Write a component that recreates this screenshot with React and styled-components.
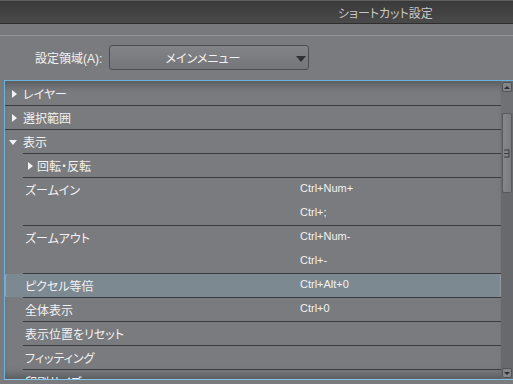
import styled, { createGlobalStyle, css } from 'styled-components';

const GlobalStyle = createGlobalStyle`
  html, body {
    margin: 0;
    padding: 0;
    background: #7a7b7e;
    overflow: hidden;
  }
  body {
    font-family: "Liberation Sans", "Noto Sans CJK JP", sans-serif;
  }
`;

const Window = styled.div`
  width: 513px;
  height: 384px;
  display: flex;
  flex-direction: column;
  background: #7a7b7e;
  color: #f2f2f2;
  font-size: 12px;
  font-feature-settings: "palt";
  overflow: hidden;
`;

const TitleBar = styled.div`
  height: 24px;
  box-sizing: border-box;
  display: flex;
  align-items: center;
  padding-left: 338px;
  background: linear-gradient(#3a3a3a, #4a4a4a);
  border-top: 1px solid #5e5e5e;
  border-bottom: 1px solid #2e2e2e;
  color: #c8c8c8;
  white-space: nowrap;
`;

const Band = styled.div`
  height: 11px;
  border-bottom: 1px solid #949598;
  background: #78797c;
`;

const Panel = styled.div`
  flex: 1;
  display: flex;
  flex-direction: column;
  padding-top: 9px;
`;

const AreaRow = styled.div`
  display: flex;
  align-items: center;
  height: 25px;
  padding-left: 35px;
`;

const Label = styled.div`
  width: 74px;
  flex-shrink: 0;
  white-space: nowrap;
`;

const Select = styled.div`
  width: 200px;
  height: 25px;
  box-sizing: border-box;
  display: flex;
  align-items: center;
  border: 1px solid #4c4d4f;
  border-radius: 3px;
  background: linear-gradient(#828386, #75767a);
`;

const SelectText = styled.div`
  flex: 1;
  text-align: center;
`;

const SelectArrow = styled.span`
  width: 0;
  height: 0;
  margin: 2px 2px 0 0;
  border-left: 5px solid transparent;
  border-right: 5px solid transparent;
  border-top: 6px solid #303133;
`;

const ListBox = styled.div`
  margin: 10px 0 0 4px;
  height: 300px;
  box-sizing: border-box;
  display: flex;
  border-top: 1px solid #6cb2dc;
  border-left: 1px solid #6cb2dc;
  border-bottom: 1px solid #86c4e6;
`;

const List = styled.div`
  flex: 1;
  overflow: hidden;
  box-shadow: inset 0 10px 8px -6px rgba(0, 0, 0, 0.28),
    inset 0 -10px 8px -6px rgba(0, 0, 0, 0.28);
`;

const Row = styled.div`
  display: flex;
  flex-direction: column;
`;

const Rule = styled.div`
  height: 1px;
  margin-left: ${(p) => p.$indent}px;
  background: ${(p) => (p.$hidden ? 'transparent' : '#3a3b3d')};
`;

const Body = styled.div`
  display: grid;
  grid-template-columns: 295px 1fr;
  height: ${(p) => p.$height}px;
  ${(p) =>
    p.$selected &&
    css`
      background: #7c8991;
      border-radius: 2px;
      box-shadow: inset 1px 0 #97a3aa, inset -1px 0 #8e9aa1;
    `}
`;

const Name = styled.div`
  display: flex;
  align-items: center;
  height: 22px;
  padding: 0 0 1px ${(p) => p.$pad}px;
  white-space: nowrap;
`;

const CaretBox = styled.span`
  width: 8px;
  display: flex;
  justify-content: flex-end;
  margin-right: ${(p) => p.$gap}px;
`;

const Caret = styled.span`
  width: 0;
  height: 0;
  ${(p) =>
    p.$open
      ? css`
          margin-top: 3px;
          border-left: 4px solid transparent;
          border-right: 4px solid transparent;
          border-top: 5px solid #f2f2f2;
        `
      : css`
          margin-top: 1px;
          border-top: 4px solid transparent;
          border-bottom: 4px solid transparent;
          border-left: 5px solid #f2f2f2;
        `}
`;

const Keys = styled.div`
  font-size: 11px;
  line-height: 24px;
  margin-top: -2px;
  white-space: nowrap;
`;

const Scrollbar = styled.div`
  width: 12px;
  display: flex;
  flex-direction: column;
  background: #68696c;
`;

const ScrollButton = styled.div`
  width: 10px;
  height: 10px;
  box-sizing: border-box;
  margin: ${(p) => (p.$down ? '0 0 1px 1px' : '1px 0 0 1px')};
  display: flex;
  align-items: center;
  justify-content: center;
  border: 1px solid #525356;
  border-radius: 2px;
  background: #848588;
`;

const ScrollArrow = styled.span`
  width: 0;
  height: 0;
  border-left: 3px solid transparent;
  border-right: 3px solid transparent;
  ${(p) =>
    p.$down
      ? css`border-top: 3px solid #2e2f31;`
      : css`border-bottom: 3px solid #2e2f31;`}
`;

const TrackGap = styled.div`
  height: ${(p) => p.$size}px;
  background: #707174;
`;

const Thumb = styled.div`
  width: 10px;
  height: 80px;
  box-sizing: border-box;
  margin-left: 1px;
  display: flex;
  align-items: center;
  justify-content: center;
  border: 1px solid #5a5b5e;
  border-radius: 2px;
  background: linear-gradient(90deg, #86878a, #7b7c7f);
`;

const Track = styled.div`
  flex: 1;
`;

const items = [
  { label: 'レイヤー', level: 0, folder: 'closed' },
  { label: '選択範囲', level: 0, folder: 'closed' },
  { label: '表示', level: 0, folder: 'open' },
  { label: '回転・反転', level: 1, folder: 'closed' },
  { label: 'ズームイン', level: 1, keys: ['Ctrl+Num+', 'Ctrl+;'] },
  { label: 'ズームアウト', level: 1, keys: ['Ctrl+Num-', 'Ctrl+-'] },
  { label: 'ピクセル等倍', level: 1, keys: ['Ctrl+Alt+0'], selected: true },
  { label: '全体表示', level: 1, keys: ['Ctrl+0'] },
  { label: '表示位置をリセット', level: 1 },
  { label: 'フィッティング', level: 1 },
  { label: '印刷サイズ', level: 1 },
];

const Grip = () => (
  <svg width="6" height="9" viewBox="0 0 6 9">
    <path d="M5 0.5V8.5M0 1H5M0 4.5H5M0 8H5" stroke="#3c3d40" strokeWidth="1" fill="none" />
  </svg>
);

const ShortcutRow = ({ item, first }) => {
  const lines = item.keys ? item.keys.length : 1;
  return (
    <Row>
      <Rule $indent={item.level * 18} $hidden={first} />
      <Body $height={23 + 24 * (lines - 1)} $selected={item.selected}>
        <Name $pad={item.level * 18 + (item.level ? 2 : 4)}>
          {item.folder && (
            <CaretBox $gap={item.level ? 4 : 6}>
              <Caret $open={item.folder === 'open'} />
            </CaretBox>
          )}
          {item.label}
        </Name>
        <Keys>
          {(item.keys || []).map((k) => (
            <div key={k}>{k}</div>
          ))}
        </Keys>
      </Body>
    </Row>
  );
};

const App = () => (
  <>
    <GlobalStyle />
    <Window>
      <TitleBar>ショートカット設定</TitleBar>
      <Band />
      <Panel>
        <AreaRow>
          <Label>設定領域(A):</Label>
          <Select>
            <SelectText>メインメニュー</SelectText>
            <SelectArrow />
          </Select>
        </AreaRow>
        <ListBox>
          <List>
            {items.map((item, i) => (
              <ShortcutRow key={item.label} item={item} first={i === 0} />
            ))}
          </List>
          <Scrollbar>
            <ScrollButton>
              <ScrollArrow />
            </ScrollButton>
            <TrackGap $size={21} />
            <Thumb>
              <Grip />
            </Thumb>
            <Track />
            <ScrollButton $down>
              <ScrollArrow $down />
            </ScrollButton>
          </Scrollbar>
        </ListBox>
      </Panel>
    </Window>
  </>
);

export default App;
